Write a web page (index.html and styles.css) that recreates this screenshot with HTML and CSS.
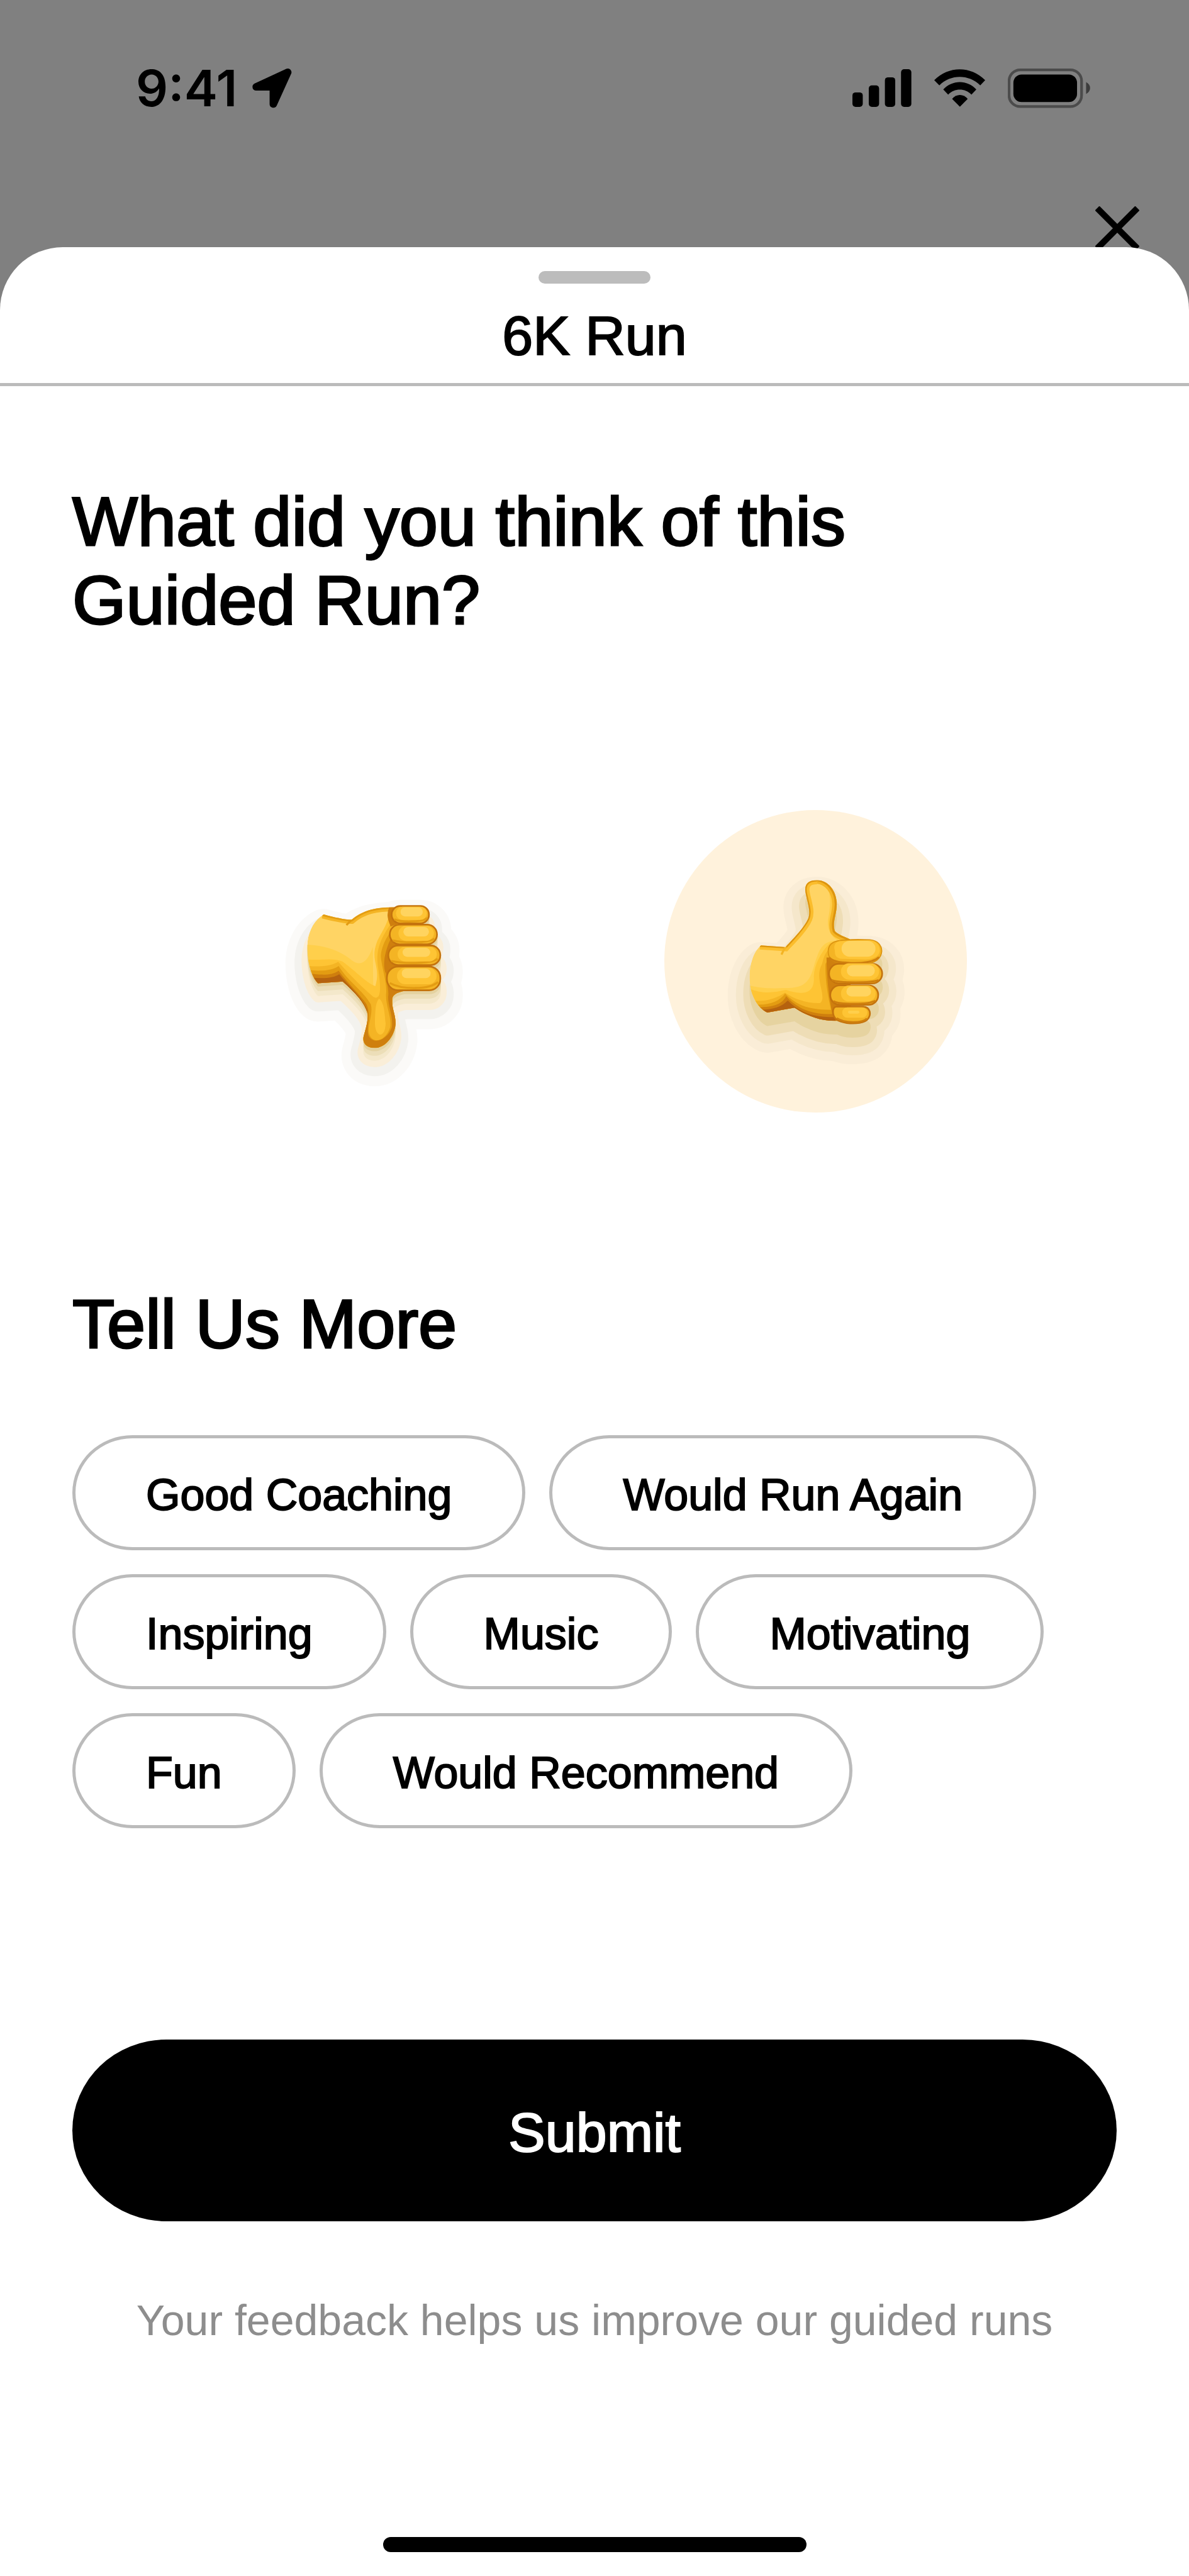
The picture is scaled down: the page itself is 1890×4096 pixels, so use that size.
FILE: index.html
```html
<!DOCTYPE html>
<html lang="en">
<head>
    <meta charset="UTF-8">
    <meta name="viewport" content="width=device-width, initial-scale=1.0">
    <title>6K Run</title>
    <link rel="stylesheet" href="styles.css">
</head>
<body>

<header class="top">
    <div class="status-bar">
        <div class="status-left">
            <span class="time">9:41</span>
            <svg class="icon-location" viewBox="682 96 192 192">
                <path d="M701 185 L854 114 L784 268 L784 185 Z" stroke="#000" stroke-width="36" stroke-linejoin="round"/>
            </svg>
        </div>
        <div class="status-right">
            <svg class="icon-signal" viewBox="112 96 286 182">
                <rect x="112" y="208" width="50" height="70" rx="15"/>
                <rect x="191" y="174" width="50" height="104" rx="15"/>
                <rect x="269" y="135" width="50" height="143" rx="15"/>
                <rect x="347" y="96" width="50" height="182" rx="15"/>
            </svg>
            <svg class="icon-wifi" viewBox="504 96 248 182">
                <path d="M504 149 C574 78 682 78 752 149 L728 174 C672 119 584 119 529 174 Z"/>
                <path d="M548 194 C593 146 664 146 709 194 L685 219 C654 187 603 187 572 219 Z"/>
                <path d="M591 240 C612 214 646 214 667 240 L629 278 Z"/>
            </svg>
            <svg class="icon-battery" viewBox="862 92 400 191">
                <rect x="868" y="98" width="352" height="178" rx="54" fill="none" stroke="#4b4b4b" stroke-width="13"/>
                <rect x="889" y="120" width="309" height="134" rx="40"/>
                <path d="M1242 157 C1268 172 1268 200 1242 215 Z" fill="#3c3c3c"/>
            </svg>
        </div>
    </div>
    <div class="close-row">
        <button type="button" class="close" aria-label="Close">
            <svg viewBox="0 0 70 70">
                <path d="M3 3 L67 67 M67 3 L3 67" stroke="#000" stroke-width="10"/>
            </svg>
        </button>
    </div>
</header>

<main class="sheet">
    <div class="sheet-header">
        <div class="grabber"></div>
        <h1 class="sheet-title">6K Run</h1>
    </div>

    <form class="feedback" id="feedbackForm">
        <h2 class="heading">What did you think of this<br>Guided Run?</h2>

        <div class="thumbs">
            <label class="thumb" aria-label="Thumbs down">
                <input type="radio" name="rating" value="down">
                <svg viewBox="-243 -334 1467 1467">
                    <defs>
                        <path id="downPalm" d="M250 172 C300 186 350 197 385 198 C440 152 500 137 600 137 L660 140 L660 540 C600 550 580 562 582 592 C580 630 600 660 598 705 C590 770 545 820 495 820 C455 818 437 795 443 765 C455 720 465 690 463 655 C450 600 400 550 342 498 L222 506 C185 470 170 390 170 325 C172 260 200 200 250 172 Z"/>
                        <g id="downShape">
                            <use href="#downPalm"/>
                            <rect x="575" y="127" width="187" height="92" rx="44"/>
                            <rect x="567" y="218" width="235" height="102" rx="50"/>
                            <rect x="560" y="320" width="258" height="102" rx="50"/>
                            <rect x="553" y="422" width="265" height="121" rx="56"/>
                        </g>
                        <clipPath id="downClip"><use href="#downPalm"/></clipPath>
                    </defs>
                    <!-- shadow -->
                    <g stroke-linejoin="round">
                        <use href="#downShape" y="80" fill="#fbfaf8" stroke="#fbfaf8" stroke-width="212"/>
                        <use href="#downShape" y="75" fill="#f3f2ee" stroke="#f3f2ee" stroke-width="124"/>
                        <use href="#downShape" y="65" fill="#faeed8" stroke="#faeed8" stroke-width="56"/>
                        <use href="#downShape" y="62" fill="#f4e8cb"/>
                        <use href="#downShape" y="38" fill="#ecdeb8"/>
                        <use href="#downShape" y="16" fill="#e4d2a0"/>
                    </g>
                    <!-- palm -->
                    <g clip-path="url(#downClip)">
                        <use href="#downPalm" fill="#ffd464"/>
                        <path d="M160 318 C260 322 330 350 380 390 C440 440 470 380 488 330 L490 560 L420 600 L160 560 Z" fill="#ffcf4b"/>
                        <path d="M160 390 C240 398 290 380 340 400 C410 450 450 500 500 520 C530 420 470 400 510 300 C540 240 560 220 575 140 L680 140 L680 860 L400 860 L300 540 L160 540 Z" fill="#fec434"/>
                        <path d="M160 420 C240 430 290 420 320 402 C380 470 440 530 490 572 C540 600 520 480 512 420 C500 330 540 270 580 210 L700 210 L700 860 L400 860 L300 540 L160 540 Z" fill="#f4b424"/>
                        <path d="M518 580 C545 600 545 660 550 700 C548 780 495 770 498 690 C500 640 500 600 518 580 Z" fill="#fec434"/>
                        <path d="M160 440 C230 450 290 445 322 422 C370 500 440 540 478 608 C490 650 465 700 468 740 C475 800 545 800 572 720 C580 670 550 620 552 560 C560 500 520 400 528 360 C540 300 560 280 590 230 L720 200 L720 880 L380 880 L300 560 L160 560 Z" fill="#e39c12"/>
                        <path d="M180 458 C240 468 290 468 322 445 C370 510 425 560 456 606 C482 660 456 710 466 758 C490 810 560 780 580 720 C588 670 562 620 562 572 C568 540 552 500 552 460 C530 420 550 340 575 290 L720 280 L720 880 L380 880 L300 560 L180 560 Z" fill="#cf7f0e"/>
                        <path d="M190 478 C240 484 300 482 325 462 C370 520 430 565 462 640 L380 640 L200 530 Z" fill="#b5620f"/>
                        <path d="M245 172 C300 186 350 197 385 198 C440 152 500 137 600 137" fill="none" stroke="#f4b424" stroke-width="40"/>
                        <path d="M245 172 C300 186 350 197 385 198 C440 152 500 137 600 137" fill="none" stroke="#e39c12" stroke-width="16"/>
                        <path d="M360 224 C370 212 378 204 390 196" fill="none" stroke="#e39c12" stroke-width="10"/>
                        <path d="M590 130 C565 170 580 200 590 225" fill="none" stroke="#cf7f0e" stroke-width="34"/>
                    </g>
                    <!-- fingers -->
                    <g fill="#f4b424" stroke="#c4730d" stroke-width="8">
                        <rect x="579" y="131" width="181" height="85" rx="42"/>
                        <rect x="570" y="222" width="229" height="95" rx="47"/>
                        <rect x="563" y="323" width="252" height="95" rx="47"/>
                        <rect x="556" y="425" width="259" height="115" rx="54"/>
                    </g>
                    <g fill="none" stroke="#e39c12" stroke-width="10">
                        <path d="M592 196 C630 212 720 210 752 190"/>
                        <path d="M584 298 C640 312 750 312 786 290"/>
                        <path d="M577 398 C640 412 760 412 802 388"/>
                        <path d="M570 505 C630 538 760 538 804 500"/>
                    </g>
                    <g fill="#fec434">
                        <rect x="600" y="135" width="150" height="64" rx="32"/>
                        <rect x="612" y="228" width="172" height="72" rx="36"/>
                        <rect x="608" y="330" width="190" height="70" rx="35"/>
                        <rect x="605" y="431" width="192" height="80" rx="40"/>
                    </g>
                    <g fill="#ffd45f">
                        <rect x="622" y="138" width="108" height="44" rx="22"/>
                        <rect x="636" y="233" width="124" height="46" rx="23"/>
                        <rect x="632" y="334" width="134" height="44" rx="22"/>
                        <rect x="628" y="435" width="140" height="46" rx="23"/>
                    </g>
                </svg>
            </label>

            <label class="thumb" aria-label="Thumbs up">
                <input type="radio" name="rating" value="up" checked>
                <svg viewBox="68 55 1446 1446">
                    <defs>
                        <path id="upPalm" d="M530 702 L647 710 C680 675 735 620 755 575 C770 540 752 500 743 450 C735 405 760 390 798 390 C850 390 892 440 892 505 C892 555 870 590 882 632 C895 650 930 660 955 673 L960 1063 L880 1063 C800 1062 735 1030 690 1000 L560 1023 C510 1000 475 930 475 855 C475 790 495 730 530 702 Z"/>
                        <g id="upShape">
                            <use href="#upPalm"/>
                            <path d="M905 677 C950 670 1000 671 1050 673 C1090 676 1110 700 1110 730 C1108 768 1075 790 1030 792 L905 788 C862 784 848 762 848 730 C850 700 870 681 905 677 Z"/>
                            <rect x="852" y="786" width="260" height="102" rx="50"/>
                            <rect x="858" y="890" width="235" height="100" rx="49"/>
                            <path d="M890 990 L1020 992 C1060 995 1060 1035 1045 1055 C1030 1078 980 1080 940 1077 C895 1070 870 1055 870 1020 C870 1000 878 990 890 990 Z"/>
                        </g>
                        <clipPath id="upClip"><use href="#upPalm"/></clipPath>
                    </defs>
                    <!-- shadow -->
                    <g stroke-linejoin="round">
                        <use href="#upShape" y="88" fill="#faedd7" stroke="#faedd7" stroke-width="208"/>
                        <use href="#upShape" y="84" fill="#f5e7cb" stroke="#f5e7cb" stroke-width="130"/>
                        <use href="#upShape" y="80" fill="#eeddb6" stroke="#eeddb6" stroke-width="60"/>
                        <use href="#upShape" y="65" fill="#e6d3a0"/>
                    </g>
                    <!-- palm -->
                    <g clip-path="url(#upClip)">
                        <use href="#upPalm" fill="#ffd464"/>
                        <path d="M832 390 C870 450 862 520 850 580 C845 640 880 670 900 680 L1000 680 L960 480 Z" fill="#ffcd48"/>
                        <path d="M465 892 C560 915 600 905 660 906 C780 905 770 820 800 750 C815 710 830 690 870 680 L980 680 L980 1080 L465 1080 Z" fill="#ffcf4b"/>
                        <path d="M465 905 C540 940 600 925 650 915 C720 940 790 940 782 850 C785 790 820 730 860 690 L980 690 L980 1080 L465 1080 Z" fill="#fec434"/>
                        <path d="M480 965 C560 975 610 950 645 928 C700 965 760 980 812 978 C850 950 780 860 822 790 C830 755 840 730 860 720 L980 720 L980 1090 L480 1090 Z" fill="#f4b424"/>
                        <path d="M500 985 C570 990 620 968 645 932 C700 990 760 1010 865 1010 C850 950 835 860 838 790 L870 740 L980 740 L980 1090 L500 1090 Z" fill="#e39c12"/>
                        <path d="M520 998 C590 996 630 985 650 945 C700 1005 780 1035 870 1030 L862 980 C850 900 845 860 843 760 L980 760 L980 1090 L520 1090 Z" fill="#cf7f0e"/>
                        <path d="M530 1010 C590 1008 630 995 658 965 C720 1030 790 1045 880 1045 L900 1090 L540 1090 Z" fill="#b5620f"/>
                        <path d="M798 385 C850 390 892 440 892 505 C892 555 870 590 882 632 C895 650 930 660 960 673" fill="none" stroke="#f4b424" stroke-width="44"/>
                        <path d="M798 385 C850 390 892 440 892 505 C892 555 870 590 882 632 C895 650 930 660 960 673" fill="none" stroke="#dc9410" stroke-width="20"/>
                        <path d="M525 702 L647 710 C680 675 735 620 755 575 C770 540 752 500 743 450 C735 405 760 390 798 390" fill="none" stroke="#fbbd2c" stroke-width="40"/>
                        <path d="M525 702 L647 710 C680 675 735 620 755 575 C770 540 752 500 743 450 C735 405 760 390 798 390" fill="none" stroke="#dc9410" stroke-width="13"/>
                        <path d="M628 746 C636 728 640 718 650 708" fill="none" stroke="#f4b424" stroke-width="10"/>
                    </g>
                    <!-- fingers -->
                    <g fill="#f4b424">
                        <path d="M905 679 C950 672 1000 673 1050 675 C1088 678 1107 702 1107 730 C1105 765 1075 787 1030 789 L905 785 C864 781 851 760 851 730 C852 702 870 683 905 679 Z" stroke="#dc9410" stroke-width="5"/>
                        <rect x="855" y="790" width="254" height="94" rx="47" stroke="#c4730d" stroke-width="8"/>
                        <rect x="861" y="893" width="229" height="93" rx="46" stroke="#c4730d" stroke-width="8"/>
                        <path d="M893 994 L1018 995 C1055 998 1056 1033 1042 1052 C1028 1074 980 1077 940 1073 C897 1066 874 1052 874 1020 C874 1003 882 994 893 994 Z" stroke="#c4730d" stroke-width="8"/>
                    </g>
                    <g fill="none" stroke="#cf7f0e" stroke-width="9">
                        <path d="M856 760 C880 784 920 784 960 786 C1020 788 1070 780 1094 758"/>
                        <path d="M868 868 C900 882 1060 882 1092 868"/>
                        <path d="M876 968 C900 984 1040 988 1076 966"/>
                        <path d="M892 1050 C930 1074 1010 1076 1036 1052"/>
                    </g>
                    <g fill="#fec434">
                        <path d="M905 682 L1050 678 C1085 680 1098 705 1098 728 C1094 755 1070 768 1030 770 L910 766 C875 755 888 740 880 715 C880 695 890 685 905 682 Z"/>
                        <rect x="912" y="788" width="182" height="78" rx="38"/>
                        <rect x="912" y="894" width="166" height="76" rx="37"/>
                        <rect x="918" y="998" width="120" height="50" rx="25"/>
                    </g>
                    <g fill="#ffd45f">
                        <rect x="915" y="680" width="162" height="76" rx="38"/>
                        <rect x="940" y="796" width="134" height="54" rx="27"/>
                        <rect x="938" y="898" width="118" height="48" rx="24"/>
                    </g>
                    <rect x="946" y="1014" width="54" height="14" rx="7" fill="#ffcf4b"/>
                </svg>
            </label>
        </div>

        <h2 class="heading">Tell Us More</h2>

        <div class="chips">
            <label class="chip"><input type="checkbox" name="more" value="coaching">Good Coaching</label>
            <label class="chip"><input type="checkbox" name="more" value="again">Would Run Again</label>
            <label class="chip"><input type="checkbox" name="more" value="inspiring">Inspiring</label>
            <label class="chip"><input type="checkbox" name="more" value="music">Music</label>
            <label class="chip"><input type="checkbox" name="more" value="motivating">Motivating</label>
            <label class="chip"><input type="checkbox" name="more" value="fun">Fun</label>
            <label class="chip"><input type="checkbox" name="more" value="recommend">Would Recommend</label>
        </div>

        <button type="submit" class="submit">Submit</button>
        <p class="note">Your feedback helps us improve our guided runs</p>
    </form>

    <div class="home-indicator"></div>
</main>

</body>
</html>
```
FILE: styles.css
```css
* {
    box-sizing: border-box;
}

body {
    margin: 0;
    background-color: #808080;
    color: #000;
    font-family: "Liberation Sans", Arial, sans-serif;
}

svg {
    display: block;
}

/* Dimmed area behind the sheet */
.top {
    height: 398px;
}

.status-bar {
    display: flex;
    justify-content: space-between;
    align-items: center;
    height: 280px;
    padding: 0 157px 0 216px;
}

.status-left {
    display: flex;
    align-items: center;
    gap: 24px;
}

.time {
    font-family: Inter, sans-serif;
    font-size: 80px;
    line-height: 100px;
    font-weight: 600;
}

.icon-location {
    width: 63px;
    height: 63px;
}

.status-right {
    display: flex;
    align-items: center;
    gap: 36px;
}

.icon-signal {
    width: 94px;
    height: 60px;
}

.icon-wifi {
    width: 81px;
    height: 60px;
}

.icon-battery {
    width: 131px;
    height: 63px;
}

.close-row {
    display: flex;
    justify-content: flex-end;
    padding: 48px 79px 0;
}

.close {
    width: 70px;
    height: 70px;
    padding: 0;
    border: none;
    background: none;
    cursor: pointer;
}

/* Bottom sheet */
.sheet {
    position: relative;
    margin-top: -5px;
    background-color: #fff;
    border-radius: 100px 100px 0 0;
    padding-bottom: 38px;
}

.sheet-header {
    padding: 38px 0 25px;
    border-bottom: 5px solid #bbb;
}

.grabber {
    width: 178px;
    height: 20px;
    margin: 0 auto 33px;
    border-radius: 10px;
    background-color: #bcbcbc;
}

.sheet-title {
    margin: 0;
    text-align: center;
    font-size: 88px;
    line-height: 100px;
    font-weight: normal;
    -webkit-text-stroke: 2px #000;
}

.feedback {
    padding: 152px 115px 0;
}

.heading {
    margin: 0;
    font-size: 110px;
    line-height: 125px;
    font-weight: normal;
    -webkit-text-stroke: 3px #000;
}

.thumbs {
    display: flex;
    justify-content: center;
    gap: 222px;
    margin: 272px 0 273px;
}

.thumb {
    width: 481px;
    height: 481px;
    border-radius: 50%;
    cursor: pointer;
}

.thumb:has(input:checked) {
    background-color: #fff2dc;
}

.thumb input,
.chip input {
    position: absolute;
    opacity: 0;
    margin: 0;
}

.chips {
    display: flex;
    flex-wrap: wrap;
    gap: 38px;
    margin-top: 115px;
}

.chip {
    padding: 50px 112px 43px;
    border: 5px solid #bbb;
    border-radius: 96px / 92px;
    font-size: 70px;
    line-height: 80px;
    -webkit-text-stroke: 2px #000;
    cursor: pointer;
}

.submit {
    display: block;
    width: 100%;
    margin-top: 336px;
    padding: 98px 0 91px;
    border: none;
    border-radius: 150px / 145px;
    background-color: #000;
    color: #fff;
    font-family: inherit;
    font-size: 88px;
    line-height: 100px;
    -webkit-text-stroke: 2px #fff;
    cursor: pointer;
}

.note {
    margin: 112px 0 0;
    text-align: center;
    color: #8d8d8d;
    font-size: 68px;
    line-height: 90px;
}

.home-indicator {
    width: 673px;
    height: 24px;
    margin: 300px auto 0;
    border-radius: 12px;
    background-color: #000;
}
```
